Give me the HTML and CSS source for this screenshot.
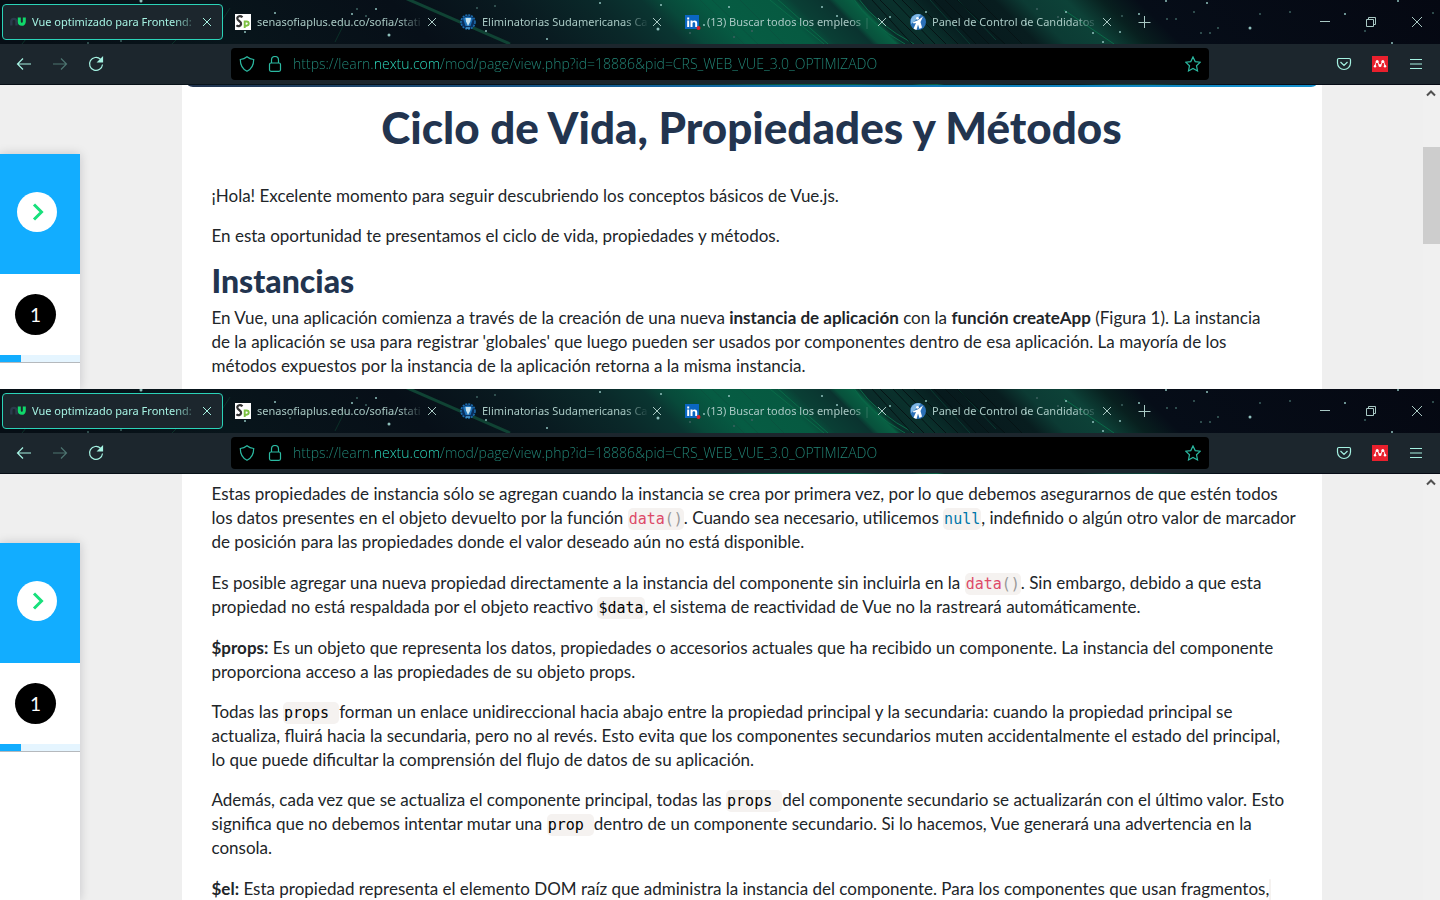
FILE: index.html
```html
<!DOCTYPE html>
<html lang="es">
<head>
<meta charset="utf-8">
<title>Ciclo de Vida, Propiedades y Métodos</title>
<link rel="stylesheet" href="styles.css">
</head>
<body>
<svg class="sprite" aria-hidden="true">
  <defs>
    <linearGradient id="sky" x1="0" x2="1440" y1="0" y2="0" gradientUnits="userSpaceOnUse" gradientTransform="skewX(45)">
      <stop offset="0" stop-color="#060e15"/><stop offset=".13" stop-color="#08151b"/><stop offset=".27" stop-color="#070f18"/><stop offset=".35" stop-color="#091a20"/><stop offset=".41" stop-color="#0a2829"/><stop offset=".445" stop-color="#0a3531"/><stop offset=".46" stop-color="#08493a"/><stop offset=".49" stop-color="#065c43"/><stop offset=".535" stop-color="#065a41"/><stop offset=".55" stop-color="#0a3f35"/><stop offset=".575" stop-color="#0a332f"/><stop offset=".58" stop-color="#08513c"/><stop offset=".592" stop-color="#086043"/><stop offset=".597" stop-color="#0a2b29"/><stop offset=".62" stop-color="#0a312c"/><stop offset=".65" stop-color="#071a1d"/><stop offset=".69" stop-color="#081d1f"/><stop offset=".71" stop-color="#0c3b34"/><stop offset=".74" stop-color="#0d4238"/><stop offset=".765" stop-color="#08201f"/><stop offset=".79" stop-color="#060d18"/><stop offset="1" stop-color="#050812"/>
    </linearGradient>
  </defs>
  <symbol id="aurora" viewBox="0 0 1440 85" preserveAspectRatio="xMidYMin slice">
    <rect width="1440" height="85" fill="url(#sky)"/>
    <g fill="none" stroke="#0a6a48">
      <path d="M405-2l105 46" stroke-width="3" stroke="#104334"/>
      <path d="M776-2l52 46M770 0l54 44M853-2q16 26 52 46M858-2q18 26 56 46M1064 10l50 34"/>
      <path d="M700 0l44 44M712 0l46 44M740 0l44 44M930 0l40 44M958 0l38 40" stroke="#0b4f3e" stroke-width=".6"/>
      <path d="M872 0l40 44M880 0l44 44M893 0l42 44M902 0l44 44M914 0l44 44M934 0l42 44M945 0l44 44M957 0l48 44M978 0l44 44" stroke="#061315"/>
      <path d="M230 8l-14 22M345 22l-10 20M180 36l-8 8M30 34l-8 10" stroke="#0b3028"/>
    </g>
    <g fill="#8fc0bc">
      <circle cx="141" cy="1" r="1.500"/><circle cx="389" cy="35" r="1.500"/><circle cx="275" cy="13" r="1"/><circle cx="352" cy="14" r="1"/><circle cx="376" cy="9" r="1"/><circle cx="245" cy="32" r="1"/><circle cx="486" cy="31" r="1"/><circle cx="547" cy="39" r="1"/><circle cx="600" cy="3" r="1"/><circle cx="658" cy="29" r="1.500"/><circle cx="661" cy="5" r="1"/><circle cx="704" cy="25" r="1"/><circle cx="729" cy="7" r="1"/><circle cx="822" cy="7" r="1"/><circle cx="837" cy="16" r="1"/><circle cx="890" cy="17" r="1"/><circle cx="926" cy="12" r="1"/><circle cx="1026" cy="24" r="1"/><circle cx="1066" cy="12" r="1"/><circle cx="1093" cy="33" r="1"/><circle cx="1120" cy="32" r="1"/><circle cx="1103" cy="42" r="1"/><circle cx="1139" cy="14" r="1"/><circle cx="1166" cy="1" r="1"/><circle cx="1207" cy="3" r="1"/><circle cx="1250" cy="28" r="1.500"/><circle cx="1345" cy="14" r="1"/><circle cx="1392" cy="43" r="1"/><circle cx="1398" cy="1" r="1"/>
    </g>
    <g fill="#3d605f">
      <circle cx="290" cy="29" r="1"/><circle cx="357" cy="9" r="1"/><circle cx="366" cy="16" r="1"/><circle cx="121" cy="41" r="1"/><circle cx="88" cy="43" r="1"/><circle cx="477" cy="8" r="1"/><circle cx="495" cy="6" r="1"/><circle cx="580" cy="27" r="1"/><circle cx="690" cy="33" r="1"/><circle cx="734" cy="37" r="1"/><circle cx="752" cy="31" r="1"/><circle cx="1037" cy="9" r="1"/><circle cx="1058" cy="17" r="1"/><circle cx="1122" cy="16" r="1"/><circle cx="1167" cy="19" r="1"/><circle cx="1176" cy="19" r="1"/><circle cx="1194" cy="12" r="1"/><circle cx="1201" cy="33" r="1"/><circle cx="1210" cy="33" r="1"/><circle cx="1218" cy="28" r="1"/><circle cx="1260" cy="14" r="1"/><circle cx="1290" cy="12" r="1"/><circle cx="1365" cy="31" r="1"/><circle cx="1433" cy="13" r="1"/>
    </g>
  </symbol>
  <symbol id="fav-nu" viewBox="0 0 16 16">
    <path d="M1.300 11.500V7.500a2.600 2.600 0 0 1 5.200 0v4" fill="none" stroke="#2b3a4b" stroke-width="2.400"/>
    <path d="M9.300 3.500v4.300a2.500 2.500 0 0 0 5 0V3.500" fill="none" stroke="#10d96b" stroke-width="3"/>
  </symbol>
  <symbol id="fav-sp" viewBox="0 0 16 16">
    <path d="M0 0h16v16H0z" fill="#fff"/>
    <path d="M7.500 3.200C5.500 1.300 2.200 2 2.300 4.500c.1 2.600 4.300 2.600 3.800 5.500-.4 2.400-3.200 2.700-4.600 1.200" fill="none" stroke="#333" stroke-width="2.200"/>
    <path d="M9.700 14V7.500h1.800c3 0 3 4.200 0 4.200H9.700" fill="none" stroke="#7cc142" stroke-width="1.900"/>
  </symbol>
  <symbol id="fav-cup" viewBox="0 0 16 16">
    <circle cx="8" cy="8" r="7" fill="#0a2f5d" stroke="#1c6cad" stroke-width="1.600" stroke-dasharray="2 1"/>
    <path d="M3 4.500Q8 .5 13 4.500L10.500 12h-5z" fill="#1e74ba"/>
    <path d="M5.500 4h5.500l-.7 3.500L8 12 6 7.500z" fill="#c5e3f3"/>
    <path d="M6 14h4" stroke="#4d9ed2" stroke-width="1.500"/>
  </symbol>
  <symbol id="fav-in" viewBox="0 0 16 16">
    <path d="M0 1h14v14H0z" fill="#0a66c2"/>
    <path d="M2.200 6.500h2V13h-2zM2.200 3.500h2v2h-2zM5.500 6.500h2v.9c1.200-1.600 4.700-1.300 4.700 1.600v4h-2V9.500c0-1.800-2.700-1.800-2.700 0V13h-2z" fill="#fff"/>
    <circle cx="13.500" cy="14" r="2" fill="#e0202b"/>
  </symbol>
  <symbol id="fav-panel" viewBox="0 0 16 16">
    <circle cx="8" cy="8" r="8" fill="#2b70b7"/>
    <path d="M1 5a7.500 7.500 0 0 1 10-4.300L6 6 1 10z" fill="#80b7e4"/>
    <circle cx="7.500" cy="4.300" r="1.400" fill="#fff"/>
    <path d="M13 2.500L10.500 8l1.500 5.500-2.500 1.500L8 10.500 6.500 16l-3-1.300L6 9 3.500 9.500 3 8.300l5-2z" fill="#fff"/>
  </symbol>
  <symbol id="close" viewBox="0 0 16 16"><path d="M4 4l8 8M12 4l-8 8"/></symbol>
  <symbol id="plus" viewBox="0 0 16 16"><path d="M7.500 2v12M1.500 8.500h12"/></symbol>
  <symbol id="minimize" viewBox="0 0 16 16"><path d="M3 7.500h10"/></symbol>
  <symbol id="restore" viewBox="0 0 16 16"><path d="M3.500 5.500h7v7h-7zM5.500 5.500v-2h7v7h-2"/></symbol>
  <symbol id="shut" viewBox="0 0 16 16"><path d="M3 3l10 10M13 3L3 13"/></symbol>
  <symbol id="back" viewBox="0 0 16 16"><path d="M15 8H1.500M7 2.500L1.500 8 7 13.500"/></symbol>
  <symbol id="forward" viewBox="0 0 16 16"><path d="M1 8h13.500M9 2.500L14.500 8 9 13.500"/></symbol>
  <symbol id="reload" viewBox="0 0 16 16"><path d="M12.500 3.200A6.500 6.500 0 1 0 14.500 8.500"/><path d="M14.500 1.500v4.500H10z" fill="currentColor"/></symbol>
  <symbol id="shield" viewBox="0 0 16 16"><path d="M8 .8c2 1.700 4.500 2.500 6.700 2.700 0 5.800-2 9.500-6.700 11.800C3.300 13 1.300 9.300 1.300 3.500 3.500 3.300 6 2.500 8 .8z"/></symbol>
  <symbol id="lock" viewBox="0 0 16 16"><path d="M4.500 7V4a3.500 3.500 0 0 1 7 0v3"/><rect x="2.500" y="7" width="11" height="8.300" rx="1.500"/></symbol>
  <symbol id="star" viewBox="0 0 16 16"><path d="M8 .9l2.200 4.700 5.100.6-3.800 3.500 1 5.200L8 12.400l-4.500 2.500 1-5.200L.7 6.200l5.100-.6z"/></symbol>
  <symbol id="pocket" viewBox="0 0 16 16"><path d="M2.800 2.500h10.400q1.300 0 1.300 1.300V7a6.500 6.500 0 0 1-13 0V3.800q0-1.300 1.300-1.300zM4.500 6L8 9.500 11.500 6"/></symbol>
  <symbol id="mendeley" viewBox="0 0 16 16">
    <path d="M0 0h16v16H0z" fill="#e9202d"/>
    <path d="M4.700 5.500Q3.200 7.500 3 10M5.500 5.500L7 9M10.500 5.500L9 9M11.300 5.500Q12.800 7.500 13 10" stroke="#fff" stroke-width="1" fill="none"/>
    <g fill="#fff"><circle cx="5.200" cy="5.500" r="1.500"/><circle cx="10.800" cy="5.500" r="1.500"/><circle cx="3" cy="10.200" r="1.200"/><circle cx="13" cy="10.200" r="1.200"/><circle cx="8" cy="9.600" r="1.500"/></g>
  </symbol>
  <symbol id="menu" viewBox="0 0 16 16"><path d="M2 3.500h12M2 8h12M2 12.500h12"/></symbol>
  <symbol id="chevron" viewBox="0 0 16 18"><path d="M5 1.500L12.500 9 5 16.500"/></symbol>
  <symbol id="up" viewBox="0 0 16 16"><path d="M4 10.500l4-4 4 4"/></symbol>
</svg>

<section class="window window--top">
  <header class="chrome">
    <svg class="chrome__sky"><use href="#aurora"/></svg>
    <div class="tabs">
      <div class="tab tab--active"><svg class="fav"><use href="#fav-nu"/></svg><span class="tab__title">Vue optimizado para Frontend: </span><button class="tab__close" aria-label="Cerrar pestaña"><svg class="ico"><use href="#close"/></svg></button></div>
      <div class="tab"><svg class="fav"><use href="#fav-sp"/></svg><span class="tab__title">senasofiaplus.edu.co/sofia/stati</span><button class="tab__close" aria-label="Cerrar pestaña"><svg class="ico"><use href="#close"/></svg></button></div>
      <div class="tab"><svg class="fav"><use href="#fav-cup"/></svg><span class="tab__title">Eliminatorias Sudamericanas Ca</span><button class="tab__close" aria-label="Cerrar pestaña"><svg class="ico"><use href="#close"/></svg></button></div>
      <div class="tab"><svg class="fav"><use href="#fav-in"/></svg><span class="tab__title">(13) Buscar todos los empleos |</span><button class="tab__close" aria-label="Cerrar pestaña"><svg class="ico"><use href="#close"/></svg></button></div>
      <div class="tab"><svg class="fav"><use href="#fav-panel"/></svg><span class="tab__title">Panel de Control de Candidatos</span><button class="tab__close" aria-label="Cerrar pestaña"><svg class="ico"><use href="#close"/></svg></button></div>
      <button class="tabs__new" aria-label="Nueva pestaña"><svg class="ico"><use href="#plus"/></svg></button>
      <div class="controls">
        <button aria-label="Minimizar"><svg class="ico"><use href="#minimize"/></svg></button>
        <button aria-label="Restaurar"><svg class="ico"><use href="#restore"/></svg></button>
        <button aria-label="Cerrar"><svg class="ico"><use href="#shut"/></svg></button>
      </div>
    </div>
    <div class="toolbar">
      <nav class="toolbar__side">
        <button aria-label="Atrás"><svg class="ico"><use href="#back"/></svg></button>
        <button aria-label="Adelante" disabled><svg class="ico"><use href="#forward"/></svg></button>
        <button aria-label="Recargar"><svg class="ico"><use href="#reload"/></svg></button>
      </nav>
      <div class="address">
        <svg class="ico"><use href="#shield"/></svg>
        <svg class="ico"><use href="#lock"/></svg>
        <input class="address__input" type="text" aria-label="Dirección" value="https://learn.nextu.com/mod/page/view.php?id=18886&amp;pid=CRS_WEB_VUE_3.0_OPTIMIZADO">
        <button aria-label="Añadir a marcadores"><svg class="ico"><use href="#star"/></svg></button>
      </div>
      <div class="toolbar__side toolbar__side--end">
        <button aria-label="Pocket"><svg class="ico"><use href="#pocket"/></svg></button>
        <button aria-label="Mendeley"><svg class="fav"><use href="#mendeley"/></svg></button>
        <button aria-label="Menú"><svg class="ico"><use href="#menu"/></svg></button>
      </div>
    </div>
  </header>
  <div class="page">
    <aside class="rail">
      <div class="rail__open"><button aria-label="Abrir menú"><svg class="ico"><use href="#chevron"/></svg></button></div>
      <div class="rail__unit"><button>1</button></div>
      <div class="rail__progress"></div>
    </aside>
    <main class="main">
      <article class="article">
        <div class="banner"></div>
        <h1>Ciclo de Vida, Propiedades y Métodos</h1>
        <p>¡Hola! Excelente momento para seguir descubriendo los conceptos básicos de Vue.js.</p>
        <p>En esta oportunidad te presentamos el ciclo de vida, propiedades y métodos.</p>
        <h2>Instancias</h2>
        <p>En Vue, una aplicación comienza a través de la creación de una nueva <b>instancia de aplicación</b> con la <b>función createApp</b> (Figura 1). La instancia<br>de la aplicación se usa para registrar 'globales' que luego pueden ser usados por componentes dentro de esa aplicación. La mayoría de los<br>métodos expuestos por la instancia de la aplicación retorna a la misma instancia.</p>
      </article>
    </main>
    <div class="scroll"><svg class="ico"><use href="#up"/></svg><div class="scroll__thumb"></div></div>
  </div>
</section>

<section class="window window--bottom">
  <header class="chrome">
    <svg class="chrome__sky"><use href="#aurora"/></svg>
    <div class="tabs">
      <div class="tab tab--active"><svg class="fav"><use href="#fav-nu"/></svg><span class="tab__title">Vue optimizado para Frontend: </span><button class="tab__close" aria-label="Cerrar pestaña"><svg class="ico"><use href="#close"/></svg></button></div>
      <div class="tab"><svg class="fav"><use href="#fav-sp"/></svg><span class="tab__title">senasofiaplus.edu.co/sofia/stati</span><button class="tab__close" aria-label="Cerrar pestaña"><svg class="ico"><use href="#close"/></svg></button></div>
      <div class="tab"><svg class="fav"><use href="#fav-cup"/></svg><span class="tab__title">Eliminatorias Sudamericanas Ca</span><button class="tab__close" aria-label="Cerrar pestaña"><svg class="ico"><use href="#close"/></svg></button></div>
      <div class="tab"><svg class="fav"><use href="#fav-in"/></svg><span class="tab__title">(13) Buscar todos los empleos |</span><button class="tab__close" aria-label="Cerrar pestaña"><svg class="ico"><use href="#close"/></svg></button></div>
      <div class="tab"><svg class="fav"><use href="#fav-panel"/></svg><span class="tab__title">Panel de Control de Candidatos</span><button class="tab__close" aria-label="Cerrar pestaña"><svg class="ico"><use href="#close"/></svg></button></div>
      <button class="tabs__new" aria-label="Nueva pestaña"><svg class="ico"><use href="#plus"/></svg></button>
      <div class="controls">
        <button aria-label="Minimizar"><svg class="ico"><use href="#minimize"/></svg></button>
        <button aria-label="Restaurar"><svg class="ico"><use href="#restore"/></svg></button>
        <button aria-label="Cerrar"><svg class="ico"><use href="#shut"/></svg></button>
      </div>
    </div>
    <div class="toolbar">
      <nav class="toolbar__side">
        <button aria-label="Atrás"><svg class="ico"><use href="#back"/></svg></button>
        <button aria-label="Adelante" disabled><svg class="ico"><use href="#forward"/></svg></button>
        <button aria-label="Recargar"><svg class="ico"><use href="#reload"/></svg></button>
      </nav>
      <div class="address">
        <svg class="ico"><use href="#shield"/></svg>
        <svg class="ico"><use href="#lock"/></svg>
        <input class="address__input" type="text" aria-label="Dirección" value="https://learn.nextu.com/mod/page/view.php?id=18886&amp;pid=CRS_WEB_VUE_3.0_OPTIMIZADO">
        <button aria-label="Añadir a marcadores"><svg class="ico"><use href="#star"/></svg></button>
      </div>
      <div class="toolbar__side toolbar__side--end">
        <button aria-label="Pocket"><svg class="ico"><use href="#pocket"/></svg></button>
        <button aria-label="Mendeley"><svg class="fav"><use href="#mendeley"/></svg></button>
        <button aria-label="Menú"><svg class="ico"><use href="#menu"/></svg></button>
      </div>
    </div>
  </header>
  <div class="page">
    <aside class="rail">
      <div class="rail__open"><button aria-label="Abrir menú"><svg class="ico"><use href="#chevron"/></svg></button></div>
      <div class="rail__unit"><button>1</button></div>
      <div class="rail__progress"></div>
    </aside>
    <main class="main">
      <article class="article article--continued">
        <p class="loose">Estas propiedades de instancia sólo se agregan cuando la instancia se crea por primera vez, por lo que debemos asegurarnos de que estén todos<br>los datos presentes en el objeto devuelto por la función <code><span class="fn">data</span><span class="punct">()</span></code>. Cuando sea necesario, utilicemos <code><span class="kw">null</span></code>, indefinido o algún otro valor de marcador<br>de posición para las propiedades donde el valor deseado aún no está disponible.</p>
        <p class="loose">Es posible agregar una nueva propiedad directamente a la instancia del componente sin incluirla en la <code><span class="fn">data</span><span class="punct">()</span></code>. Sin embargo, debido a que esta<br>propiedad no está respaldada por el objeto reactivo <code>$data</code>, el sistema de reactividad de Vue no la rastreará automáticamente.</p>
        <p><b>$props:</b> Es un objeto que representa los datos, propiedades o accesorios actuales que ha recibido un componente. La instancia del componente<br>proporciona acceso a las propiedades de su objeto props.</p>
        <p>Todas las <code>props </code>forman un enlace unidireccional hacia abajo entre la propiedad principal y la secundaria: cuando la propiedad principal se<br>actualiza, fluirá hacia la secundaria, pero no al revés. Esto evita que los componentes secundarios muten accidentalmente el estado del principal,<br>lo que puede dificultar la comprensión del flujo de datos de su aplicación.</p>
        <p class="loose">Además, cada vez que se actualiza el componente principal, todas las <code>props </code>del componente secundario se actualizarán con el último valor. Esto<br>significa que no debemos intentar mutar una <code>prop </code>dentro de un componente secundario. Si lo hacemos, Vue generará una advertencia en la<br>consola.</p>
        <p><b>$el:</b> Esta propiedad representa el elemento DOM raíz que administra la instancia del componente. Para los componentes que usan fragmentos,<code></code></p>
      </article>
    </main>
    <div class="scroll"><svg class="ico"><use href="#up"/></svg></div>
  </div>
</section>
</body>
</html>
```
FILE: styles.css
```css
* { box-sizing: border-box; }
body {
  margin: 0;
  height: 100vh;
  overflow: hidden;
  display: flex;
  flex-direction: column;
  font-family: Lato, "Open Sans", sans-serif;
  color: #212529;
}
button {
  border: 0;
  padding: 0;
  background: none;
  color: inherit;
  font: inherit;
  display: grid;
  place-items: center;
}
.sprite { position: absolute; width: 0; height: 0; }
.ico {
  width: 16px;
  height: 16px;
  flex: none;
  fill: none;
  stroke: currentColor;
  stroke-width: 1.2;
}
.fav { width: 16px; height: 16px; flex: none; }

.window { display: flex; flex-direction: column; }
.window--top { flex: none; }
.window--bottom { flex: 1; min-height: 0; }

/* Browser chrome */
.chrome { position: relative; flex: none; padding-bottom: 1px; overflow: hidden; background: #060d14; }
.chrome__sky { position: absolute; inset: 0; width: 100%; height: 100%; }
.tabs {
  position: relative;
  display: flex;
  align-items: center;
  gap: 4px;
  height: 44px;
  padding-left: 2px;
  font: 11px/16px "Noto Sans", sans-serif;
  color: #a9c9c4;
}
.tab {
  display: flex;
  align-items: center;
  width: 221px;
  height: 36px;
  padding: 0 7px;
  border: 1px solid transparent;
  border-radius: 4px;
}
.tab--active { background: #1c262d; border-color: #2bd3b8; color: #a5f2e2; }
.tab__title {
  flex: 1;
  margin-left: 6px;
  white-space: nowrap;
  overflow: hidden;
  -webkit-mask-image: linear-gradient(to right, #000 85%, transparent);
  mask-image: linear-gradient(to right, #000 85%, transparent);
}
.tabs__new { width: 36px; height: 36px; }
.controls { display: flex; margin-left: auto; }
.controls button { width: 46px; height: 36px; }
.controls .ico, .tab__close .ico, .tabs__new .ico { stroke-width: 1; }

.toolbar {
  position: relative;
  display: flex;
  align-items: center;
  height: 40px;
  background: #1c262d;
  color: #a5f2e2;
}
.toolbar__side { display: flex; width: 231px; padding: 0 6px; }
.toolbar__side--end { justify-content: flex-end; }
.toolbar__side button { width: 36px; height: 32px; }
.toolbar__side button:disabled { color: #4d7470; }
.address {
  flex: 1;
  display: flex;
  align-items: center;
  gap: 12px;
  height: 32px;
  padding: 0 8px;
  border-radius: 4px;
  background: #000;
  color: #2bb9a1;
}
.address__input {
  flex: 1;
  min-width: 0;
  margin-left: -2px;
  padding: 0;
  border: 0;
  outline: 0;
  font: 300 14px/24px "Open Sans", sans-serif;
  color: transparent;
  background: linear-gradient(to right, #238a7b 82px, #2fe5c8 82px, #2fe5c8 148px, #238a7b 148px);
  -webkit-background-clip: text;
  background-clip: text;
}

/* Course page */
.page { flex: 1; min-height: 0; display: flex; background: #efefef; }
.rail {
  width: 80px;
  flex: none;
  margin-top: 69px;
  background: #fff;
  box-shadow: 0 0 10px rgba(0, 0, 30, .18);
}
.rail__open { height: 120px; padding: 38px 17px; background: #12adff; color: #18e07c; }
.rail__open button { width: 40px; height: 40px; border-radius: 50%; background: #fff; }
.rail__open .ico { stroke-width: 3; height: 18px; }
.rail__unit { padding: 20px 15px; }
.rail__unit button { width: 41px; height: 41px; border-radius: 50%; background: #000; color: #fff; font-size: 19px; }
.rail__progress {
  height: 8px;
  border-bottom: 1px solid #b5b9bd;
  background: linear-gradient(to right, #12adff 26%, #e5f5ff 26%);
}
.main { flex: 1; min-width: 0; display: flex; justify-content: center; }
.article {
  width: 1140px;
  padding: 0 30px;
  background: #fff;
  font-size: 17px;
  line-height: 24px;
  white-space: nowrap;
  overflow: hidden;
}
.article--continued { padding-top: 8px; }
.banner {
  height: 2px;
  margin: 0 -24px;
  border-radius: 0 0 8px 8px / 0 0 2px 2px;
  background: linear-gradient(to right, #22344f, #12609a 40%, #0d7fbd 70%, #138fcb);
}
h1, h2 { color: #22344f; font-weight: 900; }
h1 { margin: 16px 0 33px; font-size: 44px; line-height: 48px; text-align: center; }
h2 { margin: 0 0 8px; font-size: 32px; line-height: 34px; }
p { margin: 0 0 16px; }
.window--top p:last-child { margin-bottom: 11px; }
.loose { margin-bottom: 17px; }
code {
  padding: 2px 1px;
  border-radius: 5px;
  background: #f5f2f0;
  font: 15px/20px "DejaVu Sans Mono", monospace;
  color: #000;
  white-space: pre;
}
.fn { color: #dd4a68; }
.punct { color: #999; }
.kw { color: #0077aa; }

.scroll { width: 17px; flex: none; background: #f0f0f0; color: #505050; }
.scroll .ico { display: block; stroke-width: 2; }
.scroll__thumb { height: 97px; margin-top: 46px; background: #cdcdcd; }
```
